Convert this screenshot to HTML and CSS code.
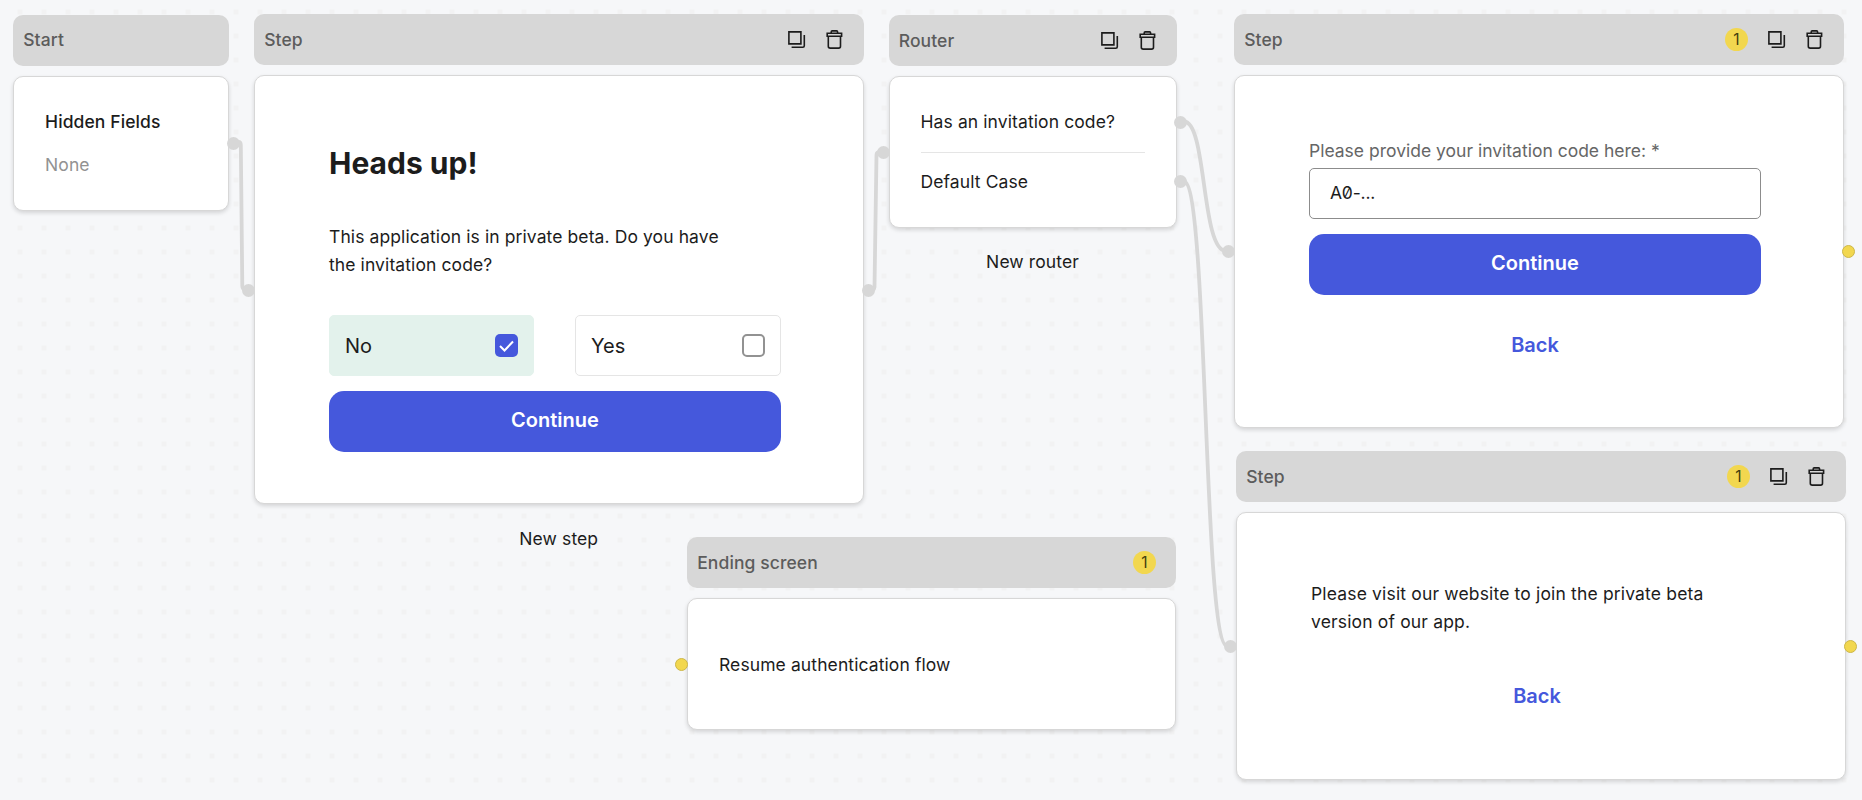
FILE: index.html
```html
<!DOCTYPE html>
<html lang="en">
<head>
<meta charset="utf-8">
<title>Flow editor</title>
<link rel="stylesheet" href="styles.css">
</head>
<body>
<svg width="0" height="0" class="sprite">
  <symbol id="copy" viewBox="0 0 19 19"><path d="M1.9 1.9h12v12h-12zM17.3 5v10.8q0 1.5-1.5 1.5H4.6"/></symbol>
  <symbol id="trash" viewBox="0 0 19 19"><path d="M2.2 3.2h14.4v3H2.2zM6.2 3V1.9q0-1 1-1h4.4q1 0 1 1V3M3.3 6.2v10q0 1.9 1.9 1.9h8.4q1.9 0 1.9-1.9v-10"/></symbol>
</svg>
<main class="canvas">
  <svg class="edges" viewBox="0 0 1862 800">
    <path d="M237 142h1.500q2.200 0 2.300 3L242.300 286q.1 3 2.700 4"/>
    <path d="M869 291q5 0 5.500-4L876.500 155q0-3 4-3"/>
    <path d="M1184 121.500C1207 121.500 1201 251 1226 251"/>
    <path d="M1184 181.500C1208 181.500 1203 646 1227 646"/>
  </svg>

  <section class="node start">
    <header class="head"><span class="kind">Start</span></header>
    <div class="card"><p class="text medium">Hidden Fields</p><p class="text muted">None</p></div>
    <i class="port out"></i>
  </section>

  <section class="node intro">
    <header class="head"><span class="kind">Step</span><svg class="icon"><use href="#copy"/></svg><svg class="icon"><use href="#trash"/></svg></header>
    <div class="card form">
      <h1 class="title">Heads up!</h1>
      <p class="text">This application is in private beta. Do you have<br>the invitation code?</p>
      <div class="options">
        <label class="option selected"><span>No</span><span class="box"><svg class="tick" viewBox="0 0 23 23"><path d="M5 12l4.500 4.500 8.500-9"/></svg></span></label>
        <label class="option"><span>Yes</span><span class="box"></span></label>
      </div>
      <button class="primary">Continue</button>
    </div>
    <p class="caption text">New step</p>
    <i class="port in"></i><i class="port out"></i>
  </section>

  <section class="node router">
    <header class="head"><span class="kind">Router</span><svg class="icon"><use href="#copy"/></svg><svg class="icon"><use href="#trash"/></svg></header>
    <div class="card"><p class="text case">Has an invitation code?</p><p class="text case">Default Case</p></div>
    <p class="caption text">New router</p>
    <i class="port in"></i><i class="port out"></i><i class="port out second"></i>
  </section>

  <section class="node code">
    <header class="head"><span class="kind">Step</span><span class="badge">1</span><svg class="icon"><use href="#copy"/></svg><svg class="icon"><use href="#trash"/></svg></header>
    <div class="card form">
      <p class="text label">Please provide your invitation code here: *</p>
      <div class="input text">A0-...</div>
      <button class="primary">Continue</button>
      <a class="back">Back</a>
    </div>
    <i class="port in"></i><i class="port out warn"></i>
  </section>

  <section class="node visit">
    <header class="head"><span class="kind">Step</span><span class="badge">1</span><svg class="icon"><use href="#copy"/></svg><svg class="icon"><use href="#trash"/></svg></header>
    <div class="card form">
      <p class="text">Please visit our website to join the private beta<br>version of our app.</p>
      <a class="back">Back</a>
    </div>
    <i class="port in"></i><i class="port out warn"></i>
  </section>

  <section class="node ending">
    <header class="head"><span class="kind">Ending screen</span><span class="badge">1</span></header>
    <div class="card"><p class="text">Resume authentication flow</p></div>
    <i class="port in warn"></i>
  </section>
</main>
</body>
</html>
```
FILE: styles.css
```css
* { box-sizing: border-box; }
body {
  margin: 0;
  background: #f6f7f9;
  color: #1c1c1c;
  font-family: Inter, "Liberation Sans", sans-serif;
}
p, h1 { margin: 0; }
.sprite { position: absolute; }
.canvas {
  position: relative;
  width: 1862px;
  height: 800px;
  overflow: hidden;
  background-size: 24px 24px;
  background-image: conic-gradient(from 90deg at 19px 19px, #f2f2f3 90deg, transparent 0);
  background-position: -1.500px -9.500px;
}
.edges {
  position: absolute;
  inset: 0;
  fill: none;
  stroke: #d7d7d7;
  stroke-width: 3.800px;
}
.node {
  position: absolute;
  display: flex;
  flex-direction: column;
  gap: 10px;
}
.start { left: 13px; top: 14.500px; width: 215.500px; height: 195px; }
.intro { left: 254px; top: 14px; width: 609.500px; height: 490px; }
.router { left: 888.500px; top: 15px; width: 288px; height: 212px; }
.code { left: 1234px; top: 14px; width: 609.500px; height: 413.500px; }
.visit { left: 1236px; top: 451px; width: 609.500px; height: 329px; }
.ending { left: 687px; top: 537px; width: 488.500px; height: 193px; }

.head {
  flex: none;
  display: flex;
  align-items: center;
  gap: 19px;
  height: 51px;
  padding: 0 19.500px 0 10.200px;
  border-radius: 10px;
  background: #d7d7d7;
}
.kind {
  flex: 1;
  color: #5c5c5c;
  font-size: 17.500px;
  font-weight: 500;
  letter-spacing: .1px;
}
.start .kind { margin-top: -1px; }
.icon {
  width: 19px;
  height: 19px;
  fill: none;
  stroke: #1c1c1c;
  stroke-width: 1.600px;
}
.badge {
  width: 23px;
  height: 23px;
  border-radius: 50%;
  background: #f2d74f;
  color: #43400f;
  font-size: 15.500px;
  line-height: 23px;
  text-align: center;
}
.card {
  flex: 1;
  padding: 31px;
  border: 1px solid #d7d7d7;
  border-radius: 10px;
  background: #fff;
  box-shadow: 0 2px 4px rgba(0, 0, 0, .14);
}
.text { font-size: 17.500px; line-height: 28px; letter-spacing: .1px; }
.medium { font-weight: 500; }
.muted { margin-top: 15px; color: #929292; }
.form { padding: 60px 81px 0 74px; }
.title { padding-top: 6px; font-size: 30px; line-height: 42px; font-weight: 700; }
.title + .text { margin-top: 39px; }
.options { display: grid; grid-template-columns: 205px 206px; gap: 41px; margin-top: 36px; }
.option {
  display: flex;
  align-items: center;
  justify-content: space-between;
  height: 61px;
  padding: 0 15px;
  border: 1px solid #e5e5e5;
  border-radius: 5px;
  font-size: 20px;
}
.option.selected { border-color: #e3f2ec; background: #e3f2ec; }
.box {
  width: 23px;
  height: 23px;
  border: 2px solid #929292;
  border-radius: 5px;
}
.selected .box { border: 0; background: #4558dc; }
.tick { display: block; fill: none; stroke: #fff; stroke-width: 2px; }
.primary {
  display: block;
  width: 452px;
  height: 61px;
  margin-top: 15px;
  padding: 0 0 3px;
  border: 0;
  border-radius: 15px;
  background: #4558dc;
  color: #fff;
  font: 600 20px Inter, sans-serif;
}
.back {
  display: block;
  width: 452px;
  color: #4558dc;
  font-size: 20px;
  line-height: 28px;
  font-weight: 600;
  text-align: center;
}
.code .form { padding-top: 61px; }
.label { color: #666; letter-spacing: 0; }
.input {
  width: 452px;
  height: 51px;
  margin-top: 2.500px;
  padding: 10.500px 20px;
  border: 1px solid #8c8c8c;
  border-radius: 5px;
  letter-spacing: -.2px;
  font-feature-settings: "zero";
}
.code .back { margin-top: 36px; }
.visit .form { padding-top: 67px; }
.visit .text { letter-spacing: .160px; }
.visit .back { margin-top: 46px; }
.case + .case { margin-top: 16px; padding-top: 15px; border-top: 1px solid #e5e5e5; }
.ending .card { display: flex; align-items: center; padding-bottom: 29px; }
.caption { position: absolute; top: 100%; left: 0; width: 100%; text-align: center; }
.port {
  position: absolute;
  width: 13px;
  height: 13px;
  border-radius: 50%;
  background: #d7d7d7;
}
.port.in { left: -12px; }
.port.out { right: -11px; }
.port.warn { border: 1px solid #cdb748; background: #f2d74f; }
.start .port { top: 122px; }
.intro .port { top: 269.500px; }
.router .port.in { top: 130.500px; }
.router .port.out { top: 100.500px; right: -10px; }
.router .port.second { top: 160px; }
.code .port { top: 230.500px; }
.visit .port { top: 188.500px; }
.ending .port { top: 121px; }
.intro .caption { top: 511px; }
.router .caption { top: 233px; }
```
